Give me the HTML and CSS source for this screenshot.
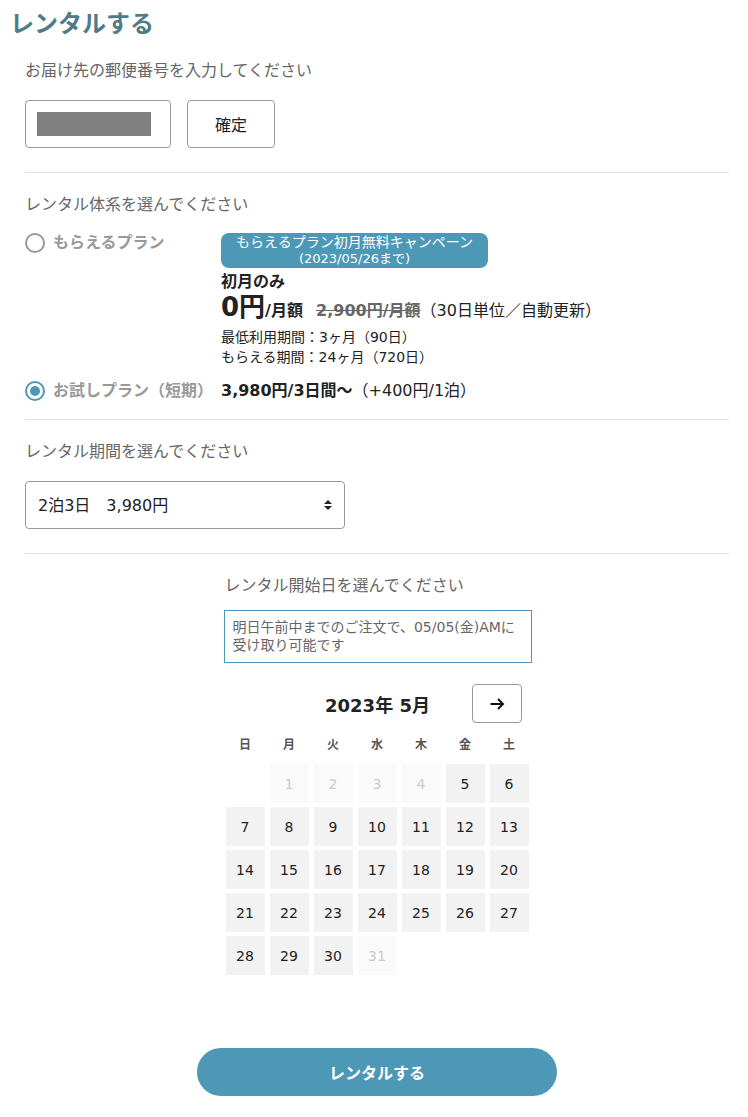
FILE: index.html
```html
<!DOCTYPE html>
<html lang="ja">
<head>
<meta charset="UTF-8" />
<meta name="viewport" content="width=device-width, initial-scale=1" />
<title>レンタルする</title>
<link rel="stylesheet" href="styles.css">
</head>
<body>

<h1 class="page-title">レンタルする</h1>

<div class="form">
  <!-- 郵便番号 -->
  <section class="section">
    <p class="label">お届け先の郵便番号を入力してください</p>
    <div class="zip-row">
      <div class="zip-field"><span class="zip-mask"></span></div>
      <button class="btn-outline">確定</button>
    </div>
  </section>

  <hr class="divider" />

  <!-- レンタル体系 -->
  <section class="section">
    <p class="label">レンタル体系を選んでください</p>

    <div class="plan">
      <div class="plan-name">
        <span class="radio"></span>
        <span>もらえるプラン</span>
      </div>
      <div class="plan-detail">
        <div class="badge">
          <div class="badge-main">もらえるプラン初月無料キャンペーン</div>
          <div class="badge-sub">(2023/05/26まで)</div>
        </div>
        <div class="first-month">初月のみ</div>
        <div class="price-line">
          <span class="price-big">0円</span><span class="price-unit">/月額</span>
          <s class="price-old">2,900円/月額</s><span class="price-note">（30日単位／自動更新）</span>
        </div>
        <div class="small">最低利用期間：3ヶ月（90日）</div>
        <div class="small">もらえる期間：24ヶ月（720日）</div>
      </div>
    </div>

    <div class="plan plan-trial">
      <div class="plan-name">
        <span class="radio checked"></span>
        <span>お試しプラン（短期）</span>
      </div>
      <div class="plan-detail">
        <span class="trial-price">3,980円/3日間～</span>（+400円/1泊）
      </div>
    </div>
  </section>

  <hr class="divider divider-tight" />

  <!-- レンタル期間 -->
  <section class="section">
    <p class="label">レンタル期間を選んでください</p>
    <div class="select-wrap">
      <select class="select">
        <option>2泊3日　3,980円</option>
        <option>3泊4日　4,380円</option>
        <option>4泊5日　4,780円</option>
      </select>
      <svg class="select-arrow" width="8" height="10" viewBox="0 0 8 10">
        <path d="M4 0 L8 4 H0 Z M0 6 H8 L4 10 Z" fill="#222" />
      </svg>
    </div>
  </section>

  <hr class="divider" />

  <!-- 開始日 -->
  <section class="section calendar-section">
    <div class="calendar-block">
      <p class="label">レンタル開始日を選んでください</p>
      <div class="notice">明日午前中までのご注文で、05/05(金)AMに<br>受け取り可能です</div>

      <div class="cal-head">
        <span></span>
        <span class="cal-month">2023年 5月</span>
        <button class="cal-next">
          <svg width="16" height="16" viewBox="0 0 16 16">
            <path d="M1.5 8 H14 M9 3 L14 8 L9 13" fill="none" stroke="#111" stroke-width="2" />
          </svg>
        </button>
      </div>

      <div class="cal-grid">
        <div class="cal-wd">日</div>
        <div class="cal-wd">月</div>
        <div class="cal-wd">火</div>
        <div class="cal-wd">水</div>
        <div class="cal-wd">木</div>
        <div class="cal-wd">金</div>
        <div class="cal-wd">土</div>
      </div>
      <div class="cal-grid cal-days" id="calDays"></div>
    </div>
  </section>

  <div class="submit-row">
    <button class="btn-submit">レンタルする</button>
  </div>
</div>

<script>
  // 2023年5月 (1日は月曜)
  const calDays = document.getElementById('calDays');
  const firstDay = 1;
  const lastDate = 31;
  const availableFrom = 5;
  const availableTo = 30;

  for (let i = 0; i < firstDay; i++) {
    const blank = document.createElement('div');
    blank.className = 'cal-day empty';
    calDays.appendChild(blank);
  }
  for (let d = 1; d <= lastDate; d++) {
    const cell = document.createElement('div');
    cell.className = 'cal-day';
    if (d < availableFrom || d > availableTo) {
      cell.classList.add('disabled');
    }
    cell.textContent = d;
    calDays.appendChild(cell);
  }
</script>

</body>
</html>
```

FILE: styles.css
```css
body {
  margin: 0;
  font-family: 'DejaVu Sans', 'Noto Sans CJK JP', sans-serif;
  color: #222;
  background: #fff;
}

p {
  margin: 0;
}

button,
select {
  font-family: inherit;
}

.page-title {
  margin: 0;
  padding: 6px 10px 0;
  font-size: 24px;
  line-height: 36px;
  font-weight: 700;
  color: #4f7b8a;
}

.form {
  padding: 17px 19px 0 25px;
}

.label {
  font-size: 16px;
  line-height: 24px;
  color: #666;
}

.divider {
  border: none;
  border-top: 1px solid #e3e3e3;
  margin: 24px 0 20px;
}

.divider-tight {
  margin-top: 16px;
}

/* 郵便番号 */
.zip-row {
  display: flex;
  gap: 16px;
  margin-top: 17px;
}

.zip-field {
  box-sizing: border-box;
  width: 146px;
  height: 48px;
  border: 1px solid #999;
  border-radius: 4px;
  padding: 11px 0 0 11px;
}

.zip-mask {
  display: block;
  width: 114px;
  height: 24px;
  background: #808080;
}

.btn-outline {
  box-sizing: border-box;
  width: 88px;
  height: 48px;
  border: 1px solid #999;
  border-radius: 4px;
  background: #fff;
  font-size: 16px;
  color: #222;
  cursor: pointer;
}

/* レンタル体系 */
.plan {
  display: grid;
  grid-template-columns: 196px 1fr;
  margin-top: 16px;
}

.plan-trial {
  margin-top: 12px;
  align-items: center;
}

.plan-name {
  display: flex;
  align-items: center;
  gap: 8px;
  font-size: 16px;
  line-height: 20px;
  font-weight: 700;
  color: #999;
  height: 20px;
}

.radio {
  box-sizing: border-box;
  flex: none;
  width: 20px;
  height: 20px;
  border: 2px solid #999;
  border-radius: 50%;
  position: relative;
}

.radio.checked {
  border-color: #4d98b6;
}

.radio.checked::after {
  content: '';
  position: absolute;
  left: 3px;
  top: 3px;
  width: 10px;
  height: 10px;
  border-radius: 50%;
  background: #4d98b6;
}

.plan-detail {
  font-size: 16px;
  line-height: 24px;
}

.badge {
  width: 267px;
  box-sizing: border-box;
  padding: 1px 0 2px;
  background: #4d98b6;
  border-radius: 8px;
  color: #fff;
  text-align: center;
}

.badge-main {
  font-size: 14px;
  line-height: 17px;
}

.badge-sub {
  font-size: 13px;
  line-height: 15px;
}

.first-month {
  margin-top: 4px;
  font-size: 16px;
  line-height: 20px;
  font-weight: 700;
}

.price-line {
  line-height: 30px;
  margin-bottom: 1px;
}

.price-big {
  font-size: 26px;
  font-weight: 700;
}

.price-unit {
  font-weight: 700;
  margin-right: 8px;
}

.price-old {
  font-weight: 700;
  color: #666;
}

.small {
  font-size: 14px;
  line-height: 20px;
}

.trial-price {
  font-weight: 700;
}

/* レンタル期間 */
.select-wrap {
  position: relative;
  width: 320px;
  margin-top: 17px;
}

.select {
  display: block;
  width: 100%;
  height: 48px;
  box-sizing: border-box;
  padding: 0 30px 0 12px;
  border: 1px solid #999;
  border-radius: 4px;
  background: #fff;
  font-size: 16px;
  color: #222;
  appearance: none;
  -webkit-appearance: none;
}

.select-arrow {
  position: absolute;
  right: 13px;
  top: 19px;
  pointer-events: none;
}

/* カレンダー */
.calendar-section {
  display: flex;
  justify-content: center;
}

.calendar-block {
  width: 308px;
  padding-left: 1px;
}

.calendar-block .label {
  margin-left: 1px;
}

.notice {
  margin-top: 12px;
  box-sizing: border-box;
  border: 1px solid #4d98b6;
  padding: 7px 8px 8px;
  font-size: 14px;
  line-height: 18px;
  color: #666;
}

.cal-head {
  display: grid;
  grid-template-columns: 1fr auto 1fr;
  align-items: center;
  margin-top: 21px;
  height: 39px;
}

.cal-month {
  font-size: 18px;
  font-weight: 700;
}

.cal-next {
  justify-self: end;
  margin-right: 10px;
  width: 50px;
  height: 39px;
  box-sizing: border-box;
  border: 1px solid #999;
  border-radius: 4px;
  background: #fff;
  display: flex;
  align-items: center;
  justify-content: center;
  cursor: pointer;
}

.cal-grid {
  display: grid;
  grid-template-columns: repeat(7, 39px);
  column-gap: 5px;
  row-gap: 4px;
  margin-left: 2px;
}

.cal-wd {
  text-align: center;
  font-size: 12px;
  line-height: 20px;
  font-weight: 700;
  color: #555;
  margin: 12px 0 9px;
}

.cal-day {
  height: 39px;
  display: flex;
  align-items: center;
  justify-content: center;
  background: #f2f2f2;
  font-size: 14px;
  color: #222;
}

.cal-day.disabled {
  background: #fafafa;
  color: #ccc;
}

.cal-day.empty {
  background: none;
}

.submit-row {
  display: flex;
  justify-content: center;
  margin-top: 73px;
  padding-bottom: 21px;
}

.btn-submit {
  width: 360px;
  height: 48px;
  border: none;
  border-radius: 24px;
  background: #4d98b6;
  color: #fff;
  font-size: 16px;
  font-weight: 700;
  cursor: pointer;
}
```
